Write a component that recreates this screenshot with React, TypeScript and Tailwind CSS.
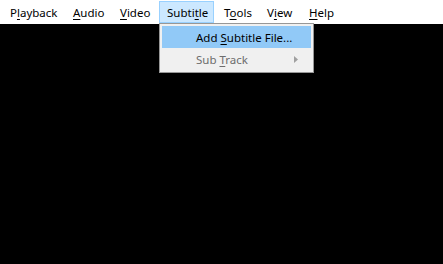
import React from 'react';

function Label({ text, u }: { text: string; u: number }) {
  return (
    <span>
      {text.slice(0, u)}
      <span className="underline decoration-1 underline-offset-[2px]">{text[u]}</span>
      {text.slice(u + 1)}
    </span>
  );
}

const menus: { text: string; u: number; w: string }[] = [
  { text: 'Playback', u: 1, w: 'w-[63px]' },
  { text: 'Audio', u: 0, w: 'w-[47px]' },
  { text: 'Video', u: 0, w: 'w-[47px]' },
  { text: 'Subtitle', u: 5, w: 'w-[55px] mr-[2px]' },
  { text: 'Tools', u: 1, w: 'w-[43px]' },
  { text: 'View', u: 1, w: 'w-[42px]' },
  { text: 'Help', u: 0, w: 'w-[42px]' },
];

export default function App() {
  return (
    <div
      className="w-[443px] h-[264px] bg-black relative overflow-hidden text-[11.5px] text-black"
      style={{ fontFamily: '"Noto Sans", "Open Sans", sans-serif' }}
    >
      <div className="h-[24px] bg-white flex items-start pl-[2px] pt-[1px]">
        {menus.map((m) => (
          <div
            key={m.text}
            className={
              'h-[22px] pl-[7px] pt-[2px] flex items-center border leading-none whitespace-nowrap ' +
              m.w +
              ' ' +
              (m.text === 'Subtitle' ? 'bg-[#cce8ff] border-[#99d1ff]' : 'border-transparent')
            }
          >
            <Label text={m.text} u={m.u} />
          </div>
        ))}
      </div>

      <div className="absolute left-[159px] top-[23px] w-[155px] bg-[#f0f0f0] border border-[#979797] p-[2px] shadow-[2px_2px_2px_rgba(0,0,0,0.3)]">
        <div className="h-[22px] bg-[#91c9f7] flex items-center pl-[34px] pt-[1px]">
          <Label text="Add Subtitle File..." u={4} />
        </div>
        <div className="h-[22px] flex items-center pl-[34px] pt-[1px] text-[#6d6d6d] relative">
          <Label text="Sub Track" u={4} />
          <svg className="absolute right-[13px] top-[8px]" width="4" height="7" viewBox="0 0 4 7">
            <path d="M0 0 L4 3.5 L0 7 Z" fill="#a0a0a0" />
          </svg>
        </div>
      </div>
    </div>
  );
}
